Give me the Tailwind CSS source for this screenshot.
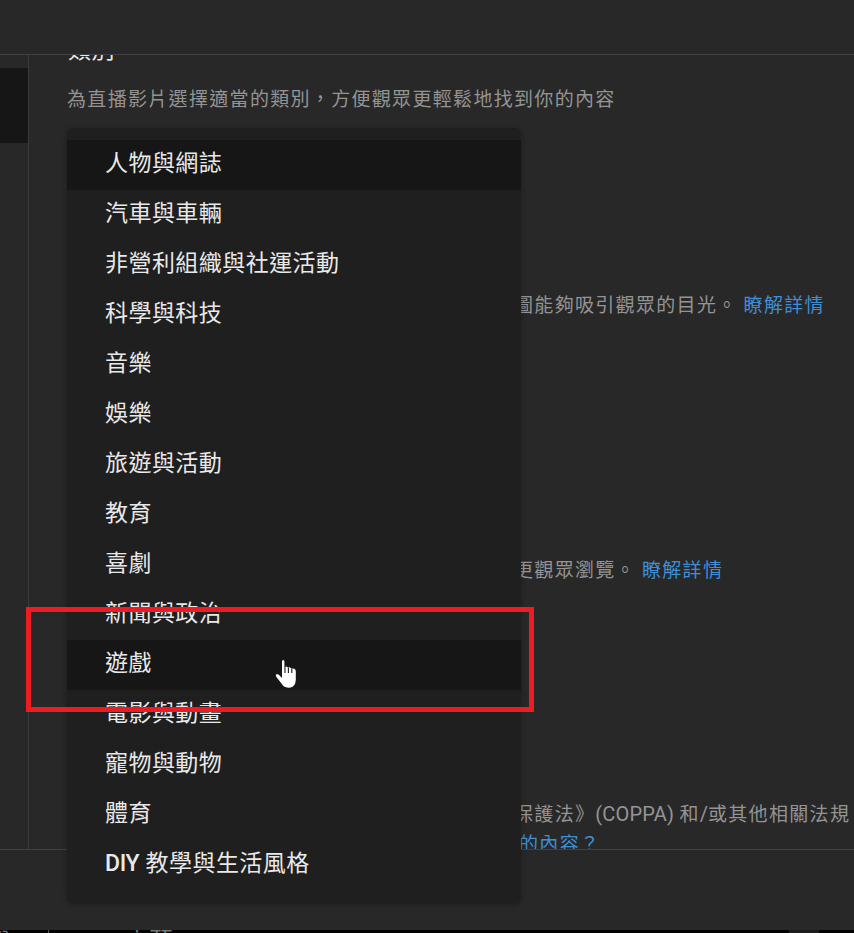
<!DOCTYPE html>
<html lang="zh-Hant">
<head>
<meta charset="utf-8">
<title>直播設定</title>
<script src="https://cdn.jsdelivr.net/npm/@tailwindcss/browser@4"></script>
</head>
<body class="bg-[#282828] font-['Roboto','Noto_Sans_CJK_TC',sans-serif]">
<div class="relative flex h-[933px] w-[854px] flex-col overflow-hidden bg-[#282828]">
  <header class="h-[55px] shrink-0 border-b border-[#404040]"></header>
  <div class="flex h-[795px] shrink-0 border-b border-[#404040]">
    <aside class="w-[29px] shrink-0 border-r border-[#3c3c3c] pt-[13px]">
      <div class="h-[75px] bg-[#161616]"></div>
    </aside>
    <main class="flex-1 overflow-hidden whitespace-nowrap pl-[38px] text-[19px] leading-[30px] tracking-[1.32px] text-[#949494]">
      <h2 class="-mt-[19px] h-[31px] pl-px text-[23px] tracking-[0.4px] text-[#e8e8e8]">類別</h2>
      <p class="mt-[18px]">為直播影片選擇適當的類別，方便觀眾更輕鬆地找到你的內容</p>
      <p class="mt-[176px] pl-[447px]">圖能夠吸引觀眾的目光。 <a class="text-[#3d8fd8]">瞭解詳情</a></p>
      <p class="mt-[235px] pl-[447px]">更觀眾瀏覽。 <a class="text-[#3d8fd8]">瞭解詳情</a></p>
      <p class="mt-[213px] pl-[447px]">保護法》<span class="text-[20px] tracking-[0.2px]">(COPPA) </span>和<span class="text-[20px] tracking-normal">/</span>或其他相關法規</p>
      <p class="pl-[452px] text-[#3d8fd8]">的內容？</p>
    </main>
  </div>
  <footer class="h-[80px] shrink-0"></footer>
  <div class="flex h-[3px] shrink-0 overflow-hidden bg-black text-[19px] leading-[22px] text-[#777]">
    <span class="w-[48px] -indent-[6px]">分</span>
    <span class="w-[77px] border-l border-[#555]"></span>
    <span class="w-[664px] text-[24px]">立萬</span>
    <span class="w-[30px] bg-[#1c1c1c]"></span>
  </div>

  <ul class="absolute left-[67px] top-[128px] h-[775px] w-[454px] rounded-md bg-[#1f1f1f] pt-[12px] text-[23px] leading-[48px] tracking-[0.45px] text-[#e9e9e9] shadow-[0_1px_5px_rgba(0,0,0,0.35)]">
    <li class="h-[50px] bg-[#161616] pl-[38px]">人物與網誌</li>
    <li class="h-[50px] pl-[38px]">汽車與車輛</li>
    <li class="h-[50px] pl-[38px]">非營利組織與社運活動</li>
    <li class="h-[50px] pl-[38px]">科學與科技</li>
    <li class="h-[50px] pl-[38px]">音樂</li>
    <li class="h-[50px] pl-[38px]">娛樂</li>
    <li class="h-[50px] pl-[38px]">旅遊與活動</li>
    <li class="h-[50px] pl-[38px]">教育</li>
    <li class="h-[50px] pl-[38px]">喜劇</li>
    <li class="h-[50px] pl-[38px]">新聞與政治</li>
    <li class="h-[50px] bg-[#161616] pl-[38px]">遊戲</li>
    <li class="h-[50px] pl-[38px]">電影與動畫</li>
    <li class="h-[50px] pl-[38px]">寵物與動物</li>
    <li class="h-[50px] pl-[38px]">體育</li>
    <li class="h-[50px] pl-[38px]"><span class="font-medium tracking-[-0.3px]">DIY</span> 教學與生活風格</li>
  </ul>

  <div class="absolute left-[26px] top-[607px] h-[105px] w-[508px] border-5 border-[#ed1c24]"></div>
  <svg class="absolute left-[275px] top-[659px]" width="22" height="30" viewBox="0 0 22 30">
    <path fill="#fff" d="M7 2.5Q7 1 8.2 1T9.4 2.5V8Q11.5 7 12.9 8.6Q14.8 7.7 16.2 9.6Q20.8 8.6 20.8 12.5V21Q20.8 25 18 27.5Q13 30 8.6 27.2L1 17.5Q.2 15.2 2 15Q4 15 5.5 17.5L7 19Z"/>
    <path fill="none" stroke="#1a1a1a" stroke-width="1.1" d="M10 7.5V14M13.4 8.5V14M16.8 9.5V14"/>
  </svg>
</div>
</body>
</html>
